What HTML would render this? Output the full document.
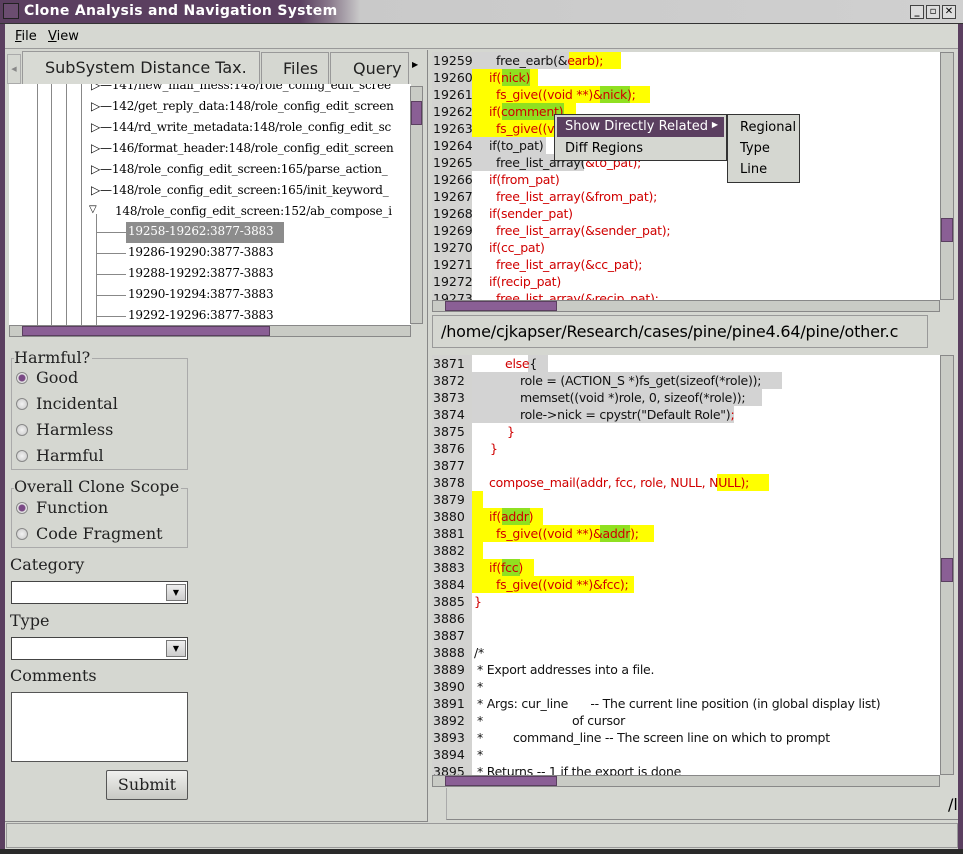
<!DOCTYPE html>
<html><head><style>
*{margin:0;padding:0;box-sizing:border-box}
body{width:963px;height:854px;position:relative;overflow:hidden;background:#d5d7d1;font-family:"DejaVu Sans","Liberation Sans",sans-serif}
.a{position:absolute}
.title{left:0;top:0;width:963px;height:24px;background:linear-gradient(90deg,#5b3f60 0,#5b3f60 300px,#8a7a8c 330px,#c9c9c9 360px,#d0d0d0 100%);border-bottom:1px solid #333}
.title span{position:absolute;left:24px;top:3px;color:#fff;font-weight:bold;font-size:14px;letter-spacing:.3px}
.wb{top:5px;width:14px;height:14px;border:1px solid #444;background:#ddd;font-size:10px;text-align:center;line-height:12px;font-weight:bold}
.menu{left:5px;top:25px;width:953px;height:24px;background:#d6d8d2;border-bottom:1px solid #999;font-size:13px}
.tab{top:52px;height:32px;border:1px solid #999;border-bottom:none;background:#d5d7d1;font-family:"DejaVu Sans",sans-serif;font-size:16px;padding-top:6px;color:#222;white-space:nowrap;overflow:hidden}
.tree{left:9px;top:84px;width:402px;height:241px;background:#fff;overflow:hidden;font-family:"DejaVu Serif",serif;font-size:12px;letter-spacing:-0.2px}
.tree div{position:absolute;white-space:nowrap}
.vl{position:absolute;width:1px;background:#888}
.sbv{background:#c9cbc5;border:1px solid #888}
.thumb{background:#8a5f95;border:1px solid #5b3f60}
.code{background:#fff;overflow:hidden;font-size:12.5px;letter-spacing:-0.25px;font-family:"DejaVu Sans",sans-serif}
.gut{position:absolute;left:0;top:0;width:40px;height:100%;background:#d3d3d1}
.ln{position:absolute;left:0;height:17px;width:100%;white-space:pre;line-height:17px}
.ln b{font-weight:normal;position:absolute;left:1px;color:#111;font-size:12.5px;letter-spacing:0}
.r{color:#d00000}.k{color:#111}
.y{background:#ffff00}.g{background:#d3d3d3}.gr{background:#90e020}
.hl{position:absolute;top:0;height:17px}
.lab{font-family:"DejaVu Serif",serif;font-size:16px;color:#222;white-space:nowrap}
.rad{width:12px;height:12px;border-radius:50%;border:1px solid #888;background:radial-gradient(#f2f2f2,#c8c8c8)}
.rad.on{background:radial-gradient(#7a4a85 0 3px,#e8e8e8 4px)}
.fs{border:1px solid #aaa}
.combo{height:23px;background:#fff;border:1px solid #444}
.combo i{position:absolute;right:1px;top:2px;width:20px;height:17px;border:1px solid #777;background:linear-gradient(#eee,#ccc);font-style:normal;font-size:8px;text-align:center;line-height:15px}
</style></head><body>
<div class="a title"><div class="a" style="left:3px;top:3px;width:16px;height:16px;border:1px solid #222;background:#6b4d70"></div><span>Clone Analysis and Navigation System</span>
<div class="a wb" style="left:910px">_</div><div class="a wb" style="left:926px">▫</div><div class="a wb" style="left:942px">✕</div></div>
<div class="a" style="left:0;top:24px;width:5px;height:830px;background:#5b3f60"></div>
<div class="a" style="left:958px;top:24px;width:5px;height:830px;background:#5b3f60"></div>
<div class="a" style="left:0;top:849px;width:963px;height:5px;background:#2a2a2a"></div>
<div class="a menu"><span class="a" style="left:10px;top:4px"><u>F</u>ile</span><span class="a" style="left:43px;top:4px"><u>V</u>iew</span></div>

<!-- left panel -->
<div class="a" style="left:5px;top:50px;width:423px;height:772px;border-right:1px solid #888;border-bottom:1px solid #888"></div>
<div class="a" style="left:7px;top:54px;width:14px;height:30px;border:1px solid #aaa;font-size:7px;color:#888;text-align:center;line-height:28px">◀</div>
<div class="a tab" style="left:22px;top:51px;width:238px;height:34px;padding-left:22px;background:#d8dad4">SubSystem Distance Tax.</div>
<div class="a tab" style="left:261px;width:68px;padding-left:21px">Files</div>
<div class="a tab" style="left:330px;width:79px;padding-left:22px">Query</div>
<div class="a" style="left:412px;top:60px;font-size:8px">▶</div>
<div class="a tree">
<div class="vl" style="left:28px;top:0;height:241px"></div><div class="vl" style="left:42px;top:0;height:241px"></div><div class="vl" style="left:57px;top:0;height:241px"></div><div class="vl" style="left:72px;top:0;height:241px"></div>
<div class="vl" style="left:87px;top:130px;height:111px"></div>
<div style="left:82px;top:-6px">▷—141/new_mail_mess:148/role_config_edit_scree</div>
<div style="left:82px;top:15px">▷—142/get_reply_data:148/role_config_edit_screen</div>
<div style="left:82px;top:36px">▷—144/rd_write_metadata:148/role_config_edit_sc</div>
<div style="left:82px;top:57px">▷—146/format_header:148/role_config_edit_screen</div>
<div style="left:82px;top:78px">▷—148/role_config_edit_screen:165/parse_action_</div>
<div style="left:82px;top:99px">▷—148/role_config_edit_screen:165/init_keyword_</div>
<div style="left:80px;top:120px;font-size:10px">▽</div><div style="left:106px;top:120px">148/role_config_edit_screen:152/ab_compose_i</div>
<div style="left:87px;top:148px;width:30px;height:1px;background:#888"></div>
<div style="left:117px;top:138px;width:158px;height:21px;background:#8c8c8c;color:#fff;padding:2px 0 0 2px">19258-19262:3877-3883</div>
<div style="left:87px;top:169px;width:30px;height:1px;background:#888"></div><div style="left:119px;top:161px">19286-19290:3877-3883</div>
<div style="left:87px;top:190px;width:30px;height:1px;background:#888"></div><div style="left:119px;top:182px">19288-19292:3877-3883</div>
<div style="left:87px;top:211px;width:30px;height:1px;background:#888"></div><div style="left:119px;top:203px">19290-19294:3877-3883</div>
<div style="left:87px;top:232px;width:30px;height:1px;background:#888"></div><div style="left:119px;top:224px">19292-19296:3877-3883</div>
</div>
<div class="a sbv" style="left:410px;top:86px;width:13px;height:238px"><div class="a thumb" style="left:0;top:14px;width:11px;height:24px"></div></div>
<div class="a sbv" style="left:9px;top:325px;width:402px;height:12px"><div class="a thumb" style="left:12px;top:0;width:248px;height:10px"></div></div>

<div class="a fs" style="left:11px;top:358px;width:177px;height:112px"></div>
<div class="a lab" style="left:14px;top:348px;background:#d5d7d1;padding-right:2px">Harmful?</div>
<div class="a rad on" style="left:16px;top:372px"></div><div class="a lab" style="left:36px;top:368px">Good</div>
<div class="a rad" style="left:16px;top:398px"></div><div class="a lab" style="left:36px;top:394px">Incidental</div>
<div class="a rad" style="left:16px;top:424px"></div><div class="a lab" style="left:36px;top:420px">Harmless</div>
<div class="a rad" style="left:16px;top:450px"></div><div class="a lab" style="left:36px;top:446px">Harmful</div>
<div class="a fs" style="left:11px;top:488px;width:177px;height:60px"></div>
<div class="a lab" style="left:14px;top:477px;background:#d5d7d1;padding-right:2px">Overall Clone Scope</div>
<div class="a rad on" style="left:16px;top:502px"></div><div class="a lab" style="left:36px;top:498px">Function</div>
<div class="a rad" style="left:16px;top:528px"></div><div class="a lab" style="left:36px;top:524px">Code Fragment</div>
<div class="a lab" style="left:10px;top:555px">Category</div>
<div class="a combo" style="left:11px;top:581px;width:177px"><i>▼</i></div>
<div class="a lab" style="left:10px;top:611px">Type</div>
<div class="a combo" style="left:11px;top:637px;width:177px"><i>▼</i></div>
<div class="a lab" style="left:10px;top:666px">Comments</div>
<div class="a" style="left:11px;top:692px;width:177px;height:70px;background:#fff;border:1px solid #555"></div>
<div class="a lab" style="left:106px;top:770px;width:82px;height:30px;border:1px solid #555;border-radius:2px;background:linear-gradient(#f0f0ee,#c8c9c4);text-align:center;line-height:28px">Submit</div>

<!-- right top -->
<div class="a code" style="left:432px;top:52px;width:508px;height:248px">
<div class="gut"></div>
<div class="ln" style="top:0"><b>19259</b><span class="hl g" style="left:40px;width:97px"></span><span class="hl y" style="left:137px;width:52px"></span><span class="a k" style="left:64px">free_earb(&amp;<span class="r">earb);</span></span></div>
<div class="ln" style="top:17px"><b>19260</b><span class="hl y" style="left:40px;width:66px"></span><span class="hl gr" style="left:70px;width:28px"></span><span class="a r" style="left:57px">if(nick)</span></div>
<div class="ln" style="top:34px"><b>19261</b><span class="hl y" style="left:40px;width:178px"></span><span class="hl gr" style="left:168px;width:30px"></span><span class="a r" style="left:64px">fs_give((void **)&amp;nick);</span></div>
<div class="ln" style="top:51px"><b>19262</b><span class="hl y" style="left:40px;width:104px"></span><span class="hl gr" style="left:70px;width:62px"></span><span class="a r" style="left:57px">if(comment)</span></div>
<div class="ln" style="top:68px"><b>19263</b><span class="hl y" style="left:40px;width:100px"></span><span class="a r" style="left:64px">fs_give((void **)&amp;comment);</span></div>
<div class="ln" style="top:85px"><b>19264</b><span class="hl g" style="left:40px;width:74px"></span><span class="a k" style="left:57px">if(to_pat)</span></div>
<div class="ln" style="top:102px"><b>19265</b><span class="hl g" style="left:40px;width:112px"></span><span class="a k" style="left:64px">free_list_array(<span class="r">&amp;to_pat);</span></span></div>
<div class="ln" style="top:119px"><b>19266</b><span class="a r" style="left:57px">if(from_pat)</span></div>
<div class="ln" style="top:136px"><b>19267</b><span class="a r" style="left:64px">free_list_array(&amp;from_pat);</span></div>
<div class="ln" style="top:153px"><b>19268</b><span class="a r" style="left:57px">if(sender_pat)</span></div>
<div class="ln" style="top:170px"><b>19269</b><span class="a r" style="left:64px">free_list_array(&amp;sender_pat);</span></div>
<div class="ln" style="top:187px"><b>19270</b><span class="a r" style="left:57px">if(cc_pat)</span></div>
<div class="ln" style="top:204px"><b>19271</b><span class="a r" style="left:64px">free_list_array(&amp;cc_pat);</span></div>
<div class="ln" style="top:221px"><b>19272</b><span class="a r" style="left:57px">if(recip_pat)</span></div>
<div class="ln" style="top:238px"><b>19273</b><span class="a r" style="left:64px">free_list_array(&amp;recip_pat);</span></div>
</div>
<div class="a sbv" style="left:940px;top:52px;width:14px;height:248px"><div class="a thumb" style="left:0;top:165px;width:12px;height:24px"></div></div>
<div class="a sbv" style="left:432px;top:300px;width:508px;height:12px"><div class="a thumb" style="left:12px;top:0;width:112px;height:10px"></div></div>
<div class="a" style="left:432px;top:315px;width:496px;height:33px;border:1px solid #999;background:#d5d7d1;font-size:16px;padding:6px 0 0 8px;white-space:nowrap;overflow:hidden;letter-spacing:-0.2px">/home/cjkapser/Research/cases/pine/pine4.64/pine/other.c</div>

<!-- menu -->
<div class="a" style="left:554px;top:114px;width:173px;height:47px;background:#d5d7d1;border:1px solid #333;font-size:13px">
<div class="a" style="left:2px;top:2px;width:167px;height:20px;background:#5b3f60;color:#fff;padding:2px 0 0 8px">Show Directly Related<span class="a" style="right:6px;top:3px;font-size:8px">▶</span></div>
<div class="a" style="left:10px;top:26px">Diff Regions</div></div>
<div class="a" style="left:727px;top:114px;width:73px;height:69px;background:#d5d7d1;border:1px solid #333;font-size:13px">
<div class="a" style="left:12px;top:5px">Regional</div><div class="a" style="left:12px;top:26px">Type</div><div class="a" style="left:12px;top:47px">Line</div></div>

<!-- right bottom -->
<div class="a code" style="left:432px;top:355px;width:508px;height:420px">
<div class="gut"></div>
<div class="ln" style="top:0"><b>3871</b><span class="hl g" style="left:96px;width:20px"></span><span class="a r" style="left:73px">else<span class="k">{</span></span></div>
<div class="ln" style="top:17px"><b>3872</b><span class="hl g" style="left:40px;width:310px"></span><span class="a k" style="left:88px">role = (ACTION_S *)fs_get(sizeof(*role));</span></div>
<div class="ln" style="top:34px"><b>3873</b><span class="hl g" style="left:40px;width:290px"></span><span class="a k" style="left:88px">memset((void *)role, 0, sizeof(*role));</span></div>
<div class="ln" style="top:51px"><b>3874</b><span class="hl g" style="left:40px;width:262px"></span><span class="a k" style="left:88px">role-&gt;nick = cpystr("Default Role")<span class="r">;</span></span></div>
<div class="ln" style="top:68px"><b>3875</b><span class="a r" style="left:75px">}</span></div>
<div class="ln" style="top:85px"><b>3876</b><span class="a r" style="left:58px">}</span></div>
<div class="ln" style="top:102px"><b>3877</b></div>
<div class="ln" style="top:119px"><b>3878</b><span class="hl y" style="left:285px;width:52px"></span><span class="a r" style="left:57px">compose_mail(addr, fcc, role, NULL, NULL);</span></div>
<div class="ln" style="top:136px"><b>3879</b><span class="hl y" style="left:40px;width:11px"></span></div>
<div class="ln" style="top:153px"><b>3880</b><span class="hl y" style="left:40px;width:71px"></span><span class="hl gr" style="left:70px;width:28px"></span><span class="a r" style="left:57px">if(addr)</span></div>
<div class="ln" style="top:170px"><b>3881</b><span class="hl y" style="left:40px;width:182px"></span><span class="hl gr" style="left:168px;width:30px"></span><span class="a r" style="left:64px">fs_give((void **)&amp;addr);</span></div>
<div class="ln" style="top:187px"><b>3882</b><span class="hl y" style="left:40px;width:11px"></span></div>
<div class="ln" style="top:204px"><b>3883</b><span class="hl y" style="left:40px;width:62px"></span><span class="hl gr" style="left:70px;width:18px"></span><span class="a r" style="left:57px">if(fcc)</span></div>
<div class="ln" style="top:221px"><b>3884</b><span class="hl y" style="left:40px;width:162px"></span><span class="a r" style="left:64px">fs_give((void **)&amp;fcc);</span></div>
<div class="ln" style="top:238px"><b>3885</b><span class="a r" style="left:42px">}</span></div>
<div class="ln" style="top:255px"><b>3886</b></div>
<div class="ln" style="top:272px"><b>3887</b></div>
<div class="ln k" style="top:289px"><b>3888</b><span class="a" style="left:42px">/*</span></div>
<div class="ln k" style="top:306px"><b>3889</b><span class="a" style="left:45px">* Export addresses into a file.</span></div>
<div class="ln k" style="top:323px"><b>3890</b><span class="a" style="left:45px">*</span></div>
<div class="ln k" style="top:340px"><b>3891</b><span class="a" style="left:45px">* Args: cur_line      -- The current line position (in global display list)</span></div>
<div class="ln k" style="top:357px"><b>3892</b><span class="a" style="left:45px">*</span><span class="a" style="left:140px">of cursor</span></div>
<div class="ln k" style="top:374px"><b>3893</b><span class="a" style="left:45px">*</span><span class="a" style="left:81px">command_line -- The screen line on which to prompt</span></div>
<div class="ln k" style="top:391px"><b>3894</b><span class="a" style="left:45px">*</span></div>
<div class="ln k" style="top:408px"><b>3895</b><span class="a" style="left:45px">* Returns -- 1 if the export is done</span></div>
</div>
<div class="a sbv" style="left:940px;top:355px;width:14px;height:420px"><div class="a thumb" style="left:0;top:202px;width:12px;height:24px"></div></div>
<div class="a sbv" style="left:432px;top:775px;width:508px;height:12px"><div class="a thumb" style="left:12px;top:0;width:112px;height:10px"></div></div>
<div class="a" style="left:446px;top:788px;width:512px;height:32px;border-bottom:1px solid #888;border-left:1px solid #aaa"></div>
<div class="a" style="left:948px;top:795px;font-size:16px">/l</div>
<div class="a" style="left:6px;top:823px;width:952px;height:25px;border:1px solid #999;background:#d5d7d1"></div>
</body></html>
